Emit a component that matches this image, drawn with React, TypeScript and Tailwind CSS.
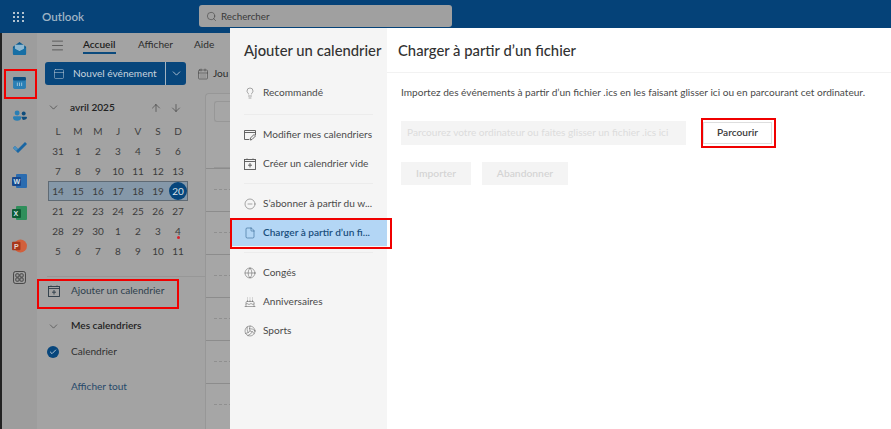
import {
  ArrowDown,
  ArrowUp,
  CalendarDays,
  Check,
  ChevronDown,
  CircleMinus,
  File,
  Globe,
  Lightbulb,
  Menu,
  PanelTop,
  Search,
  Volleyball,
  Cake,
} from 'lucide-react';

const weeks = [
  ['31', '1', '2', '3', '4', '5', '6'],
  ['7', '8', '9', '10', '11', '12', '13'],
  ['14', '15', '16', '17', '18', '19', '20'],
  ['21', '22', '23', '24', '25', '26', '27'],
  ['28', '29', '30', '1', '2', '3', '4'],
  ['5', '6', '7', '8', '9', '10', '11'],
];

const RedBox = ({ className }: { className: string }) => (
  <div className={`absolute border-2 border-[#f00000] pointer-events-none ${className}`} />
);

const AddCalIcon = ({ size = 12 }: { size?: number }) => (
  <svg width={size} height={size} viewBox="0 0 12 12" fill="none" stroke="currentColor" strokeWidth="0.900">
    <rect x="0.500" y="1.500" width="11" height="10" />
    <path d="M0.500 3.500h11M3 0.500v1M9 0.500v1M6 5v4.500M4 7.200h4" />
  </svg>
);

const EditCalIcon = () => (
  <svg width="12" height="12" viewBox="0 0 12 12" fill="none" stroke="currentColor" strokeWidth="0.900">
    <path d="M5 10.500H0.500v-9h11V6M0.500 3.500h11" />
    <path d="M6 11l0.500-2 3.500-3.500 1.500 1.500L8 10.500z" />
  </svg>
);

const OfficeIcon = ({ letter, back, front }: { letter: string; back: string; front: string }) => (
  <svg width="15" height="14" viewBox="0 0 15 14">
    <rect x="4" width="11" height="14" rx="1" fill={back} />
    <rect x="0" y="3" width="9" height="9" rx="1" fill={front} />
    <text x="1.500" y="10.200" fontSize="7" fontWeight="700" fill="#d8e2e8" fontFamily="Liberation Sans, sans-serif">
      {letter}
    </text>
  </svg>
);

const AppRail = () => (
  <div className="w-[37px] shrink-0 flex flex-col items-center border-l-2 border-[#222] bg-[#9d9d9d]">
    <div className="h-[30px] w-full flex items-center justify-center mb-[4px]">
      <svg width="15" height="15" viewBox="0 0 16 16">
        <path d="M1 6l7-5 7 5v7a2 2 0 0 1-2 2H3a2 2 0 0 1-2-2z" fill="#0b5a8e" />
        <path d="M3 4h10v5l-5 2-5-2z" fill="#8fb7cf" />
        <path d="M1 7l7 4 7-4v6a2 2 0 0 1-2 2H3a2 2 0 0 1-2-2z" fill="#176fa5" />
      </svg>
    </div>
    <div className="relative h-[32px] w-full flex items-center justify-center">
      <svg width="13" height="12" viewBox="0 0 15 14">
        <rect width="15" height="14" rx="2" fill="#2a7fb5" />
        <rect width="15" height="4" rx="1.500" fill="#0b4e80" />
        <path d="M5 6.500v4M7.500 6.500v4M10 6.500v4" stroke="#a9cbe0" strokeWidth="1" />
      </svg>
      <RedBox className="left-[2px] right-0 top-[2px] bottom-0" />
    </div>
    <div className="h-[32px] flex items-center justify-center">
      <svg width="14" height="11" viewBox="0 0 17 13">
        <circle cx="5" cy="3.400" r="3" fill="#2a7fb5" />
        <circle cx="13" cy="4" r="2.400" fill="#0e4c7c" />
        <path d="M10 8h6a1 1 0 0 1 1 1c0 2-2 3-5 3z" fill="#0e4c7c" />
        <path d="M0 9a1.500 1.500 0 0 1 1.500-1.500h7A1.500 1.500 0 0 1 10 9c0 2.500-2 4-5 4S0 11.500 0 9z" fill="#2a7fb5" />
      </svg>
    </div>
    <div className="h-[33px] flex items-center justify-center">
      <svg width="16" height="13" viewBox="0 0 16 13">
        <path d="M1 7l2-2 3 3 7-7 2 2-9 9z" fill="#1a66a3" />
        <path d="M1 7l2-2 3 3-2 2z" fill="#4a90c0" />
      </svg>
    </div>
    <div className="h-[33px] flex items-center justify-center">
      <OfficeIcon letter="W" back="#2b6cb0" front="#17488d" />
    </div>
    <div className="h-[32px] flex items-center justify-center">
      <OfficeIcon letter="X" back="#2f8f5b" front="#0f5c35" />
    </div>
    <div className="h-[33px] flex items-center justify-center">
      <svg width="15" height="14" viewBox="0 0 16 15">
        <circle cx="9" cy="7.500" r="7" fill="#d2603c" />
        <rect x="0" y="3" width="9" height="9" rx="1" fill="#a8371b" />
        <text x="2" y="10.500" fontSize="7.500" fontWeight="700" fill="#e5d6d0" fontFamily="Liberation Sans, sans-serif">
          P
        </text>
      </svg>
    </div>
    <div className="h-[31px] flex items-center justify-center">
      <svg width="13" height="13" viewBox="0 0 14 14" fill="none" stroke="#3f3f3f" strokeWidth="1">
        <rect x="0.500" y="0.500" width="13" height="13" rx="2.500" />
        <rect x="3" y="3" width="3.500" height="3.500" rx="1" />
        <rect x="7.500" y="3" width="3.500" height="3.500" rx="1" />
        <rect x="3" y="7.500" width="3.500" height="3.500" rx="1" />
        <rect x="7.500" y="7.500" width="3.500" height="3.500" rx="1" />
      </svg>
    </div>
  </div>
);

const Ribbon = () => (
  <div className="h-[55px] shrink-0 flex flex-col">
    <div className="h-[24px] flex items-center text-[10.100px] text-[#2c2c2c]">
      <Menu size={15} strokeWidth={1} className="ml-[13px] text-[#333]" />
      <div className="ml-[18px] w-[33px] relative font-semibold text-[#1d1d1d]">
        Accueil
        <div className="absolute left-0 right-0 top-[15px] h-[2px] bg-[#0b4a7d]" />
      </div>
      <span className="ml-[22px] w-[34px]">Afficher</span>
      <span className="ml-[22px]">Aide</span>
    </div>
    <div className="mt-[5px] h-[23px] ml-[8px] flex items-center">
      <div className="h-[23px] w-[141px] flex rounded-[3px] text-[#c7d3dc] text-[10.100px] bg-[#07467c] whitespace-nowrap">
        <div className="w-[121px] flex items-center pl-[8px] gap-[8px] border-r border-[#a3b3c0]">
          <PanelTop size={12} strokeWidth={1} className="shrink-0" />
          <span>Nouvel événement</span>
        </div>
        <div className="flex-1 flex items-center justify-center">
          <ChevronDown size={13} strokeWidth={1.500} />
        </div>
      </div>
      <CalendarDays size={12} strokeWidth={1} className="ml-[11px] text-[#333]" />
      <span className="ml-[4px] text-[10.100px] text-[#2c2c2c]">Jou</span>
    </div>
  </div>
);

const MiniCalendar = () => (
  <div className="pl-[11px]">
    <div className="h-[29px] mt-[5px] flex items-center text-[#222]">
      <ChevronDown size={13} strokeWidth={1} className="ml-[-1px]" />
      <span className="ml-[10px] text-[10.100px] font-semibold w-[80px]">avril 2025</span>
      <ArrowUp size={12} strokeWidth={1} />
      <ArrowDown size={12} strokeWidth={1} className="ml-[8px]" />
    </div>
    <div className="w-[140px] grid grid-cols-7 text-[10px] text-[#3f3f3f]">
      {['L', 'M', 'M', 'J', 'V', 'S', 'D'].map((d, i) => (
        <div key={i} className="h-[19px] flex items-center justify-center">
          {d}
        </div>
      ))}
    </div>
    {weeks.map((week, w) => (
      <div
        key={w}
        className={`w-[140px] h-[20px] grid grid-cols-7 text-[10px] text-[#3c3c3c] ${
          w === 2 ? 'bg-[#8598a9] outline outline-[#5f6a74] -outline-offset-1' : ''
        }`}
      >
        {week.map((d, i) => (
          <div key={i} className="relative flex items-center justify-center">
            {w === 2 && i === 6 ? (
              <div className="w-[18px] h-[18px] rounded-full bg-[#07467c] text-[#d7e0e6] flex items-center justify-center">
                {d}
              </div>
            ) : (
              d
            )}
            {w === 4 && i === 6 && (
              <div className="absolute top-[15px] left-[9px] w-[2.500px] h-[2.500px] rounded-full bg-[#d8202c]" />
            )}
          </div>
        ))}
      </div>
    ))}
  </div>
);

const Sidebar = () => (
  <div className="w-[168px] shrink-0 flex flex-col">
    <MiniCalendar />
    <div className="mt-[15px] ml-[10px] border-t border-[#979797]" />
    <div className="relative h-[28px] flex items-center text-[10.100px] text-[#2e3f4d]">
      <span className="ml-[11px] text-[#2b3a46]">
        <AddCalIcon />
      </span>
      <span className="ml-[11px]">Ajouter un calendrier</span>
      <RedBox className="left-0 top-[2px] bottom-[-4px] w-[142px]" />
    </div>
    <div className="mt-[12px] h-[18px] flex items-center">
      <ChevronDown size={13} strokeWidth={1} className="ml-[10px] text-[#2c2c2c]" />
      <span className="ml-[11px] text-[10.100px] font-semibold text-[#1f1f1f]">Mes calendriers</span>
    </div>
    <div className="mt-[8px] h-[18px] flex items-center">
      <div className="ml-[10px] w-[12px] h-[12px] rounded-full bg-[#07467c] flex items-center justify-center">
        <Check size={8} strokeWidth={2.500} className="text-[#cfdbe4]" />
      </div>
      <span className="ml-[12px] text-[10.100px] text-[#303030]">Calendrier</span>
    </div>
    <div className="ml-[34px] mt-[18px] h-[16px] text-[10.100px] text-[#27496a]">Afficher tout</div>
  </div>
);

const CalendarStrip = () => (
  <div className="flex-1 mt-[5px] border-l border-t border-[#979797] rounded-tl-[4px] bg-[#a6a6a6] text-[10px] text-[#3f3f3f]">
    <div className="h-[74px] pt-[7px] pl-[8px]">
      <div className="h-[21px] border border-[#979797] border-r-0 rounded-l-[3px]" />
      <div className="mt-[45px] border-t border-[#979797]" />
    </div>
    {['8', '9', '10', '11', '12', '13'].map((h) => (
      <div key={h} className="h-[43px] border-t border-[#8c8c8c]">
        <div className="h-[21px] ml-[8px] pr-[4px] text-right border-b border-dashed border-[#8f8f8f]">{h}</div>
      </div>
    ))}
  </div>
);

type NavItem = { label: string; icon: React.ReactNode };

const NavRow = ({ item, height }: { item: NavItem; height: number }) => (
  <div style={{ height }} className="flex items-center pl-[14px] text-[10.100px] text-[#4a4a4a] whitespace-nowrap">
    <span className="w-[19px] shrink-0 flex items-center text-[#555]">{item.icon}</span>
    <span>{item.label}</span>
  </div>
);

const AddCalendarNav = () => (
  <div className="w-[157px] shrink-0 bg-[#f5f5f5] flex flex-col">
    <div className="h-[44px] pl-[14px] flex items-center text-[14.800px] font-medium text-[#323232] whitespace-nowrap">
      Ajouter un calendrier
    </div>
    <NavRow item={{ label: 'Recommandé', icon: <Lightbulb size={12} strokeWidth={1} /> }} height={42} />
    <div className="mx-[14px] border-t border-[#ececec]" />
    <div className="mt-[5px]" />
    <NavRow item={{ label: 'Modifier mes calendriers', icon: <EditCalIcon /> }} height={29} />
    <NavRow item={{ label: 'Créer un calendrier vide', icon: <AddCalIcon /> }} height={29} />
    <div className="mt-[5px] mx-[14px] border-t border-[#ececec]" />
    <div className="mt-[5px]" />
    <NavRow item={{ label: 'S’abonner à partir du w...', icon: <CircleMinus size={12} strokeWidth={1} /> }} height={30} />
    <div className="relative h-[27px] flex items-center pl-[14px] bg-[#b3d6f5] text-[10.100px] font-semibold text-[#1a4f7d] whitespace-nowrap">
      <span className="w-[19px] shrink-0">
        <File size={12} strokeWidth={1} />
      </span>
      <span>Charger à partir d’un fi...</span>
      <RedBox className="left-0 right-[-5px] top-[-1px] bottom-[-3px]" />
    </div>
    <div className="mt-[6px] mx-[14px] border-t border-[#ececec]" />
    <div className="mt-[6px]" />
    <NavRow item={{ label: 'Congés', icon: <Globe size={12} strokeWidth={1} /> }} height={28} />
    <NavRow item={{ label: 'Anniversaires', icon: <Cake size={12} strokeWidth={1} /> }} height={29} />
    <NavRow item={{ label: 'Sports', icon: <Volleyball size={12} strokeWidth={1} /> }} height={29} />
  </div>
);

const UploadPanel = () => (
  <div className="flex-1 flex flex-col bg-white">
    <div className="h-[45px] pl-[11px] flex items-center border-b border-[#f2f2f2] text-[14.800px] font-medium text-[#323232]">
      Charger à partir d’un fichier
    </div>
    <div className="pl-[14px] flex flex-col">
      <p className="mt-[11px] h-[16px] leading-[16px] text-[10.100px] text-[#4a4a4a] whitespace-nowrap">
        Importez des événements à partir d’un fichier .ics en les faisant glisser ici ou en parcourant cet ordinateur.
      </p>
      <div className="mt-[21px] flex items-center">
        <div className="w-[285px] h-[24px] bg-[#f4f4f4] pl-[6px] flex items-center text-[10.100px] text-[#dcdcdc] whitespace-nowrap">
          Parcourez votre ordinateur ou faites glisser un fichier .ics ici
        </div>
        <div className="relative ml-[17px] w-[69px] h-[22px] flex items-center justify-center bg-white border border-[#dedede] text-[10.100px] font-semibold text-[#3a3a3a]">
          Parcourir
          <RedBox className="left-[-3px] right-[-5px] top-[-5px] bottom-[-5px]" />
        </div>
      </div>
      <div className="mt-[17px] flex gap-[11px] text-[10.300px] font-semibold text-[#d4d4d4]">
        <div className="w-[70px] h-[23px] bg-[#f4f4f4] flex items-center justify-center">Importer</div>
        <div className="w-[86px] h-[23px] bg-[#f4f4f4] flex items-center justify-center">Abandonner</div>
      </div>
    </div>
  </div>
);

export default function App() {
  return (
    <div className="relative w-[891px] h-[429px] overflow-hidden bg-[#a3a3a3] font-['Lato','Open_Sans',sans-serif]">
      <div className="h-[33px] bg-[#054278] flex items-start">
        <div className="h-[33px] w-[199px] flex items-center text-[#9fb3c4]">
          <div className="ml-[13px] w-[11px] grid grid-cols-3 gap-[2px]">
            {Array.from({ length: 9 }).map((_, i) => (
              <div key={i} className="w-[2px] h-[2px] bg-[#b3c3d0]" />
            ))}
          </div>
          <span className="ml-[18px] text-[11.600px] font-semibold">Outlook</span>
        </div>
        <div className="mt-[5px] h-[22px] w-[253px] rounded-[3px] bg-[#a0a0a0] flex items-center pl-[7px] text-[9.800px] text-[#3a3a3a]">
          <Search size={11} strokeWidth={1.200} />
          <span className="ml-[4px]">Rechercher</span>
        </div>
      </div>
      <div className="flex h-[396px]">
        <AppRail />
        <div className="flex-1 flex flex-col">
          <Ribbon />
          <div className="flex flex-1">
            <Sidebar />
            <CalendarStrip />
          </div>
        </div>
      </div>
      <div className="absolute left-[230px] top-[28px] right-0 bottom-0 flex">
        <AddCalendarNav />
        <UploadPanel />
      </div>
    </div>
  );
}
